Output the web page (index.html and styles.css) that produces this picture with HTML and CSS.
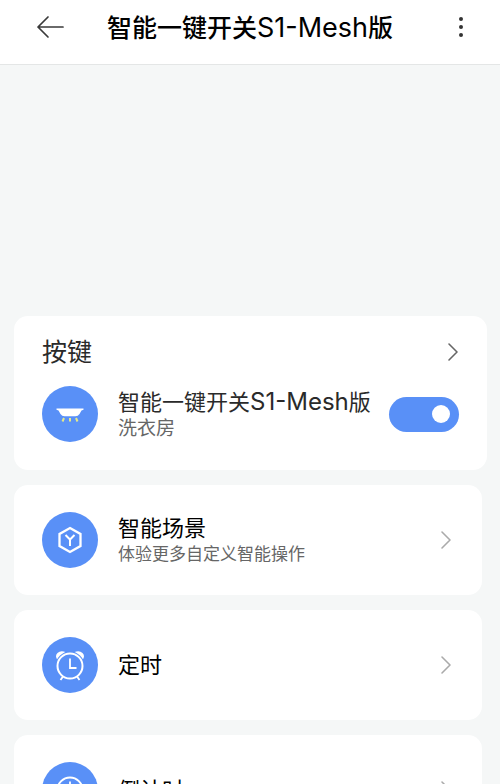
FILE: index.html
```html
<!DOCTYPE html>
<html lang="zh-CN">
<head>
<meta charset="utf-8">
<meta name="viewport" content="width=device-width, initial-scale=1">
<title>智能一键开关S1-Mesh版</title>
<link rel="stylesheet" href="styles.css">
</head>
<body>
<header class="topbar">
  <button class="icon-button" type="button" aria-label="返回">
    <svg width="28" height="24" viewBox="0 0 28 24" fill="none" stroke="#3a3a3a" stroke-width="1.7" stroke-linecap="round" stroke-linejoin="round"><path d="M27 12H2M12 2L2 12l10 10"/></svg>
  </button>
  <h1 class="topbar-title">智能一键开关<span class="topbar-model">S1-Mesh</span>版</h1>
  <button class="icon-button" type="button" aria-label="更多">
    <svg width="6" height="24" viewBox="0 0 6 24" fill="#333"><circle cx="3" cy="4" r="2"/><circle cx="3" cy="12" r="2"/><circle cx="3" cy="20" r="2"/></svg>
  </button>
</header>
<main class="content">
  <section class="card keys">
    <a class="keys-head" href="#keys">
      <h2 class="keys-title">按键</h2>
      <svg class="chevron" width="12" height="20" viewBox="0 0 12 20"><path d="M2 2l8 8-8 8"/></svg>
    </a>
    <div class="row">
      <svg class="badge" viewBox="0 0 56 56"><circle cx="28" cy="28" r="28" fill="#5990f7"/><path d="M14.500 22.500h27v1.200l-2 .8-2 3.500q-1.500 2.200-4 2.200h-11q-2.500 0-4-2.200l-2-3.500-2-.8z" fill="#fff"/><path d="M22 32l-1.500 3.500M28 32v3.500M34 32l1.500 3.500" fill="none" stroke="#e6ea88" stroke-width="2"/></svg>
      <label class="texts" for="power">
        <span class="device-name">智能一键开关<span class="device-model">S1-Mesh</span>版</span>
        <span class="room">洗衣房</span>
      </label>
      <input class="switch" id="power" type="checkbox" role="switch" checked>
    </div>
  </section>
  <nav class="links" aria-label="功能">
    <a class="card row link" href="#scene">
      <svg class="badge" viewBox="0 0 56 56"><circle cx="28" cy="28" r="28" fill="#5990f7"/><g fill="none" stroke="#fff"><path d="M28 16l10.500 6v12L28 40l-10.500-6V22z" stroke-width="2.300"/><path d="M23.500 23l4.500 4.500 4.500-4.500M28 27.500V34" stroke-width="2"/></g></svg>
      <span class="texts"><span class="link-title">智能场景</span><span class="hint">体验更多自定义智能操作</span></span>
      <svg class="chevron pale" width="12" height="20" viewBox="0 0 12 20"><path d="M2 2l8 8-8 8"/></svg>
    </a>
    <a class="card row link" href="#timer">
      <svg class="badge" viewBox="0 0 56 56"><circle cx="28" cy="28" r="28" fill="#5990f7"/><path d="M15.500 23q-3-4 0-7t8-1zM40.500 23q3-4 0-7t-8-1z" fill="#fff"/><circle cx="28" cy="29" r="14.500" fill="#5990f7"/><g fill="none" stroke="#fff"><circle cx="28" cy="29" r="12.500" stroke-width="2"/><path d="M28 21.500V31h6.500M21 39.500l-2.500 3.500M35 39.500l2.500 3.500" stroke-width="1.800"/></g></svg>
      <span class="texts"><span class="link-title">定时</span></span>
      <svg class="chevron pale" width="12" height="20" viewBox="0 0 12 20"><path d="M2 2l8 8-8 8"/></svg>
    </a>
    <a class="card row link" href="#countdown">
      <svg class="badge" viewBox="0 0 56 56"><circle cx="28" cy="28" r="28" fill="#5990f7"/><g fill="none" stroke="#fff"><circle cx="28" cy="28" r="12.500" stroke-width="2"/><path d="M28 19.500V29h6.500" stroke-width="1.800"/></g></svg>
      <span class="texts"><span class="link-title">倒计时</span></span>
      <svg class="chevron pale" width="12" height="20" viewBox="0 0 12 20"><path d="M2 2l8 8-8 8"/></svg>
    </a>
  </nav>
</main>
</body>
</html>
```
FILE: styles.css
```css
* { box-sizing: border-box; }

body {
  margin: 0;
  background: #f5f7f7;
  color: #000;
  font-family: Inter, "Noto Sans CJK SC", sans-serif;
}

a { color: inherit; text-decoration: none; }
svg { display: block; flex: none; }

.topbar {
  display: grid;
  grid-template-columns: 1fr auto 1fr;
  align-items: center;
  height: 65px;
  padding: 0 36px 10px;
  background: #fff;
  border-bottom: 1px solid #e4e6e6;
}

.icon-button {
  justify-self: start;
  padding: 0;
  border: 0;
  background: none;
}

.icon-button:last-child { justify-self: end; }

.topbar-title {
  margin: 0;
  padding-top: 2px;
  font-size: 25px;
  line-height: 32px;
  font-weight: 500;
  white-space: nowrap;
}

.topbar-model {
  font-size: 27px;
  font-weight: 400;
}

.content {
  display: flex;
  flex-direction: column;
  gap: 15px;
  padding: 251px 13px 15px 14px;
}

.card {
  background: #fff;
  border-radius: 14px;
}

.keys { padding: 20px 28px 28px; }

.keys-head {
  display: flex;
  align-items: center;
  justify-content: space-between;
  margin-bottom: 18px;
}

.keys-title {
  margin: 0;
  color: #2a2a2a;
  font-size: 25px;
  line-height: 32px;
  font-weight: 400;
}

.row {
  display: flex;
  align-items: center;
}

.badge { width: 56px; height: 56px; }

.texts {
  display: flex;
  flex: 1;
  flex-direction: column;
  min-width: 0;
  padding-left: 20px;
  white-space: nowrap;
}

.keys .texts { padding-top: 2px; }

.device-name {
  color: #2a2a2a;
  font-size: 22px;
  line-height: 28px;
}

.device-model { font-size: 24px; }

.room {
  color: #666;
  font-size: 19px;
  line-height: 26px;
}

.switch {
  display: flex;
  align-items: center;
  justify-content: flex-end;
  flex: none;
  width: 70px;
  height: 35px;
  margin: 0;
  padding: 0 9px;
  appearance: none;
  border-radius: 18px;
  background: #c8cccc;
}

.switch:checked { background: #5990f7; }

.switch::before {
  content: "";
  width: 18px;
  height: 18px;
  border-radius: 50%;
  background: #fff;
}

.switch:not(:checked) { justify-content: flex-start; }

.links {
  display: flex;
  flex-direction: column;
  gap: 15px;
  padding-right: 5px;
}

.link { padding: 27px 30px 27px 28px; }

.link-title {
  font-size: 22px;
  line-height: 28px;
}

.hint {
  color: #666;
  font-size: 17px;
  line-height: 24px;
}

.chevron {
  fill: none;
  stroke: #666;
  stroke-width: 1.6;
  stroke-linecap: round;
  stroke-linejoin: round;
}

.pale { stroke: #aaa; }
```
